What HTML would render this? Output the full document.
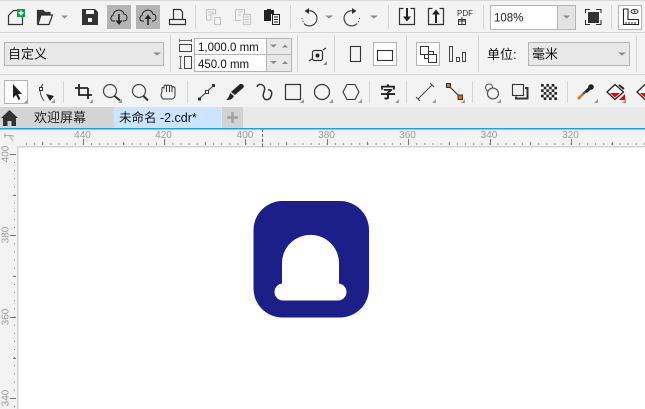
<!DOCTYPE html>
<html><head><meta charset="utf-8">
<style>
html,body{margin:0;padding:0;width:645px;height:409px;overflow:hidden;background:#f3f3f3}
svg{display:block}
text{font-family:"Liberation Sans","Noto Sans CJK SC",sans-serif}
</style></head><body>
<svg width="645" height="409" viewBox="0 0 645 409" xmlns="http://www.w3.org/2000/svg">
<defs><pattern id="ck" width="5.34" height="5.34" patternUnits="userSpaceOnUse" x="541" y="84"><rect width="5.34" height="5.34" fill="#222"/><rect width="2.67" height="2.67" fill="#fff" x="2.67"/><rect width="2.67" height="2.67" fill="#fff" y="2.67"/></pattern></defs>
<rect width="645" height="409" fill="#f3f3f3"/>
<rect y="0" width="645" height="1" fill="#d8d8d8"/>
<!-- row separators -->
<rect y="32" width="645" height="1" fill="#d6d6d6"/>
<rect y="74" width="645" height="1" fill="#d6d6d6"/>
<g fill="#d6d6d6">
<rect x="195" y="5" width="1" height="24"/><rect x="290" y="5" width="1" height="24"/><rect x="388" y="5" width="1" height="24"/><rect x="483" y="5" width="1" height="24"/><rect x="611" y="5" width="1" height="24"/>
<rect x="170" y="35" width="1" height="37"/><rect x="297" y="35" width="1" height="37"/><rect x="334" y="35" width="1" height="37"/><rect x="406" y="35" width="1" height="37"/><rect x="478" y="35" width="1" height="37"/><rect x="636" y="35" width="1" height="37"/>
<rect x="63" y="81" width="1" height="22"/><rect x="187" y="81" width="1" height="22"/><rect x="369" y="81" width="1" height="22"/><rect x="406" y="81" width="1" height="22"/><rect x="472" y="81" width="1" height="22"/><rect x="567" y="81" width="1" height="22"/>
</g>

<!-- ROW 1 -->
<path d="M8.5 15.5 L13.5 10.5 H22.5 V24.5 H8.5 Z" fill="none" stroke="#333" stroke-width="1.2"/>
<rect x="17" y="9" width="8" height="8" fill="#0c9d45"/>
<path d="M21 10.5v5M18.5 13h5" stroke="#fff" stroke-width="1.4"/>
<path d="M37.5 24.5 V10.5 H43 L45 12.5 H50 V15 H41 L38 24.5 H49 L52.5 15 H50" fill="none" stroke="#333" stroke-width="1.2"/>
<path d="M37 10 H43 L45 12 H50 V15 H41 L38 22 H37 Z" fill="#333"/>
<path d="M61 15.5h7l-3.500 3z" fill="#8a8a8a"/>
<path d="M82 9 H95 L98 12 V25 H82 Z" fill="#333"/>
<rect x="86" y="10" width="8" height="4" fill="#f3f3f3"/>
<rect x="88" y="18" width="4" height="4" fill="#f3f3f3"/>
<rect x="107" y="5" width="24" height="24" fill="#b4b4b4"/>
<rect x="136" y="5" width="24" height="24" fill="#b4b4b4"/>
<path d="M115 21 H113 C110 21 110.500 16 113 15.500 C113 10 122 7.500 124 14 C128 14.500 128 21 124 21 H123" fill="none" stroke="#222" stroke-width="1"/>
<path d="M119 14 V21" stroke="#222" stroke-width="1.600"/><path d="M115.500 20.500h7l-3.500 4.500z" fill="#222"/>
<path d="M144 21 H142 C139 21 139.500 16 142 15.500 C142 10 151 7.500 153 14 C157 14.500 157 21 153 21 H152" fill="none" stroke="#222" stroke-width="1"/>
<path d="M148 18 V25" stroke="#222" stroke-width="1.600"/><path d="M144.500 19h7l-3.500 -4.500z" fill="#222"/>
<path d="M173.500 19 V9.500 H180.500 L182.500 12 V19 M169.500 24.500 V19.500 H185.500 V24.500 Z" fill="none" stroke="#333" stroke-width="1.200"/>
<g fill="none" stroke="#c4c4c4" stroke-width="1.100">
<path d="M206.500 9.500 H215.500 V14 H211 V20 H206.500 Z M208 12h6M208 15h2"/>
<rect x="214.500" y="17.500" width="6" height="7"/>
<path d="M235.500 9.500 H244.500 V14.500 M235.500 9.500 V20.500 H241 M238 12h5M238 15h3"/>
<rect x="243.500" y="14.500" width="7" height="10"/><path d="M245 17h4M245 19.500h4M245 22h4"/>
</g>
<path d="M264 10 H267 V9 H271 V10 H274 V14 H271 V21 H264 Z" fill="#222"/>
<rect x="272.500" y="14.500" width="7" height="10" fill="#f3f3f3" stroke="#222"/>
<path d="M274 17h4M274 19.500h4M274 22h4" stroke="#222"/>
<path d="M308 11 A7.500 7.500 0 1 1 304 23.500" fill="none" stroke="#333" stroke-width="1.100"/>
<path d="M304.500 11 L309 8 V14 Z" fill="#333"/>
<path d="M301.500 18.500h1M302.500 21.500h1" stroke="#333"/>
<path d="M325 15.500h8l-4 3z" fill="#8a8a8a"/>
<path d="M353 11 A7.500 7.500 0 1 0 357 23.500" fill="none" stroke="#333" stroke-width="1.100"/>
<path d="M356.500 11 L352 8 V14 Z" fill="#333"/>
<path d="M360 18.500h-1M359 21.500h-1" stroke="#333"/>
<path d="M370 15.500h8l-4 3z" fill="#8a8a8a"/>
<path d="M403.500 8.500 H399.500 V24.500 H414.500 V8.500 H410.500" fill="none" stroke="#333" stroke-width="1.200"/>
<path d="M407 8 V17" stroke="#222" stroke-width="2"/><path d="M403 16.500h8l-4 5z" fill="#222"/>
<path d="M432.500 8.500 H428.500 V24.500 H443.500 V8.500 H439.500" fill="none" stroke="#333" stroke-width="1.200"/>
<path d="M436 14 V23" stroke="#222" stroke-width="2"/><path d="M432 14.500h8l-4 -5z" fill="#222"/>
<text x="457" y="16" font-size="8" fill="#333">PDF</text>
<rect x="458.500" y="19.500" width="7" height="5" fill="none" stroke="#333"/><path d="M462 17v7M459 21h6" stroke="#333"/>
<rect x="490.500" y="5.500" width="85" height="24" fill="#fff" stroke="#b4b4b4"/>
<rect x="557" y="6" width="18" height="23" fill="#e3e3e3"/><rect x="557" y="6" width="1" height="23" fill="#b4b4b4"/>
<path d="M563 15.500h7l-3.500 3z" fill="#8a8a8a"/>
<text x="494" y="21.500" font-size="11.500" fill="#222">108%</text>
<rect x="588" y="12" width="11" height="11" fill="#333"/>
<path d="M585.500 13 V9.500 H590 M596 9.500 H601 V13 M601 20 V24.500 H596 M590 24.500 H585.500 V20" fill="none" stroke="#333" stroke-width="1.100"/>
<rect x="618.500" y="5.500" width="23" height="24" fill="#fff" stroke="#b4b4b4"/>
<path d="M623.500 9 V24.500 H638.500 V19.500 H628 V9 Z" fill="none" stroke="#222" stroke-width="1.100"/>
<path d="M626 24v-2M629 24v-2M632 24v-2M635 24v-2" stroke="#222"/>
<ellipse cx="634.500" cy="11.500" rx="3.500" ry="2" fill="none" stroke="#333"/><circle cx="634.500" cy="11.500" r="1" fill="#333"/>

<!-- ROW 2 -->
<rect x="4.500" y="42.500" width="159" height="23" fill="#e8e8e8" stroke="#b4b4b4"/>
<text x="8" y="58.500" font-size="13" fill="#111">自定义</text>
<path d="M153 52.500h8l-4 3z" fill="#8a8a8a"/>
<path d="M179 40.500h13M179.500 39v3M191.500 39v3" stroke="#666" stroke-width="1"/>
<rect x="179.500" y="44.500" width="12" height="7" fill="none" stroke="#444"/>
<path d="M180.500 56v13M179 56.500h3M179 68.500h3" stroke="#666" stroke-width="1"/>
<rect x="184.500" y="56.500" width="7" height="12" fill="none" stroke="#444"/>
<rect x="194.500" y="38.500" width="97" height="33" fill="#fff" stroke="#b4b4b4"/>
<rect x="266" y="39" width="25" height="32" fill="#e8e8e8"/>
<rect x="266" y="39" width="1" height="32" fill="#b4b4b4"/>
<rect x="195" y="54" width="96" height="1" fill="#b4b4b4"/>
<text x="198" y="51" font-size="11.500" fill="#111">1,000.0 mm</text>
<text x="198" y="68" font-size="11.500" fill="#111">450.0 mm</text>
<path d="M270 44.500h7l-3.500 3zM270 61h7l-3.500 3z" fill="#8a8a8a"/>
<path d="M282 47.500h6l-3 -3zM282 64h6l-3 -3z" fill="#8a8a8a"/>
<rect x="312.500" y="50.500" width="10" height="10" rx="2" fill="none" stroke="#333" stroke-width="1.200"/>
<circle cx="317.500" cy="55.500" r="2" fill="#222"/>
<path d="M309 61 L312 59 M323 50 L326 48" stroke="#333" stroke-width="1.200"/>
<path d="M327 65 h-4 l4 -4z" fill="#888"/>
<rect x="350.500" y="46.500" width="10" height="15" fill="none" stroke="#333" stroke-width="1.100"/>
<rect x="373.500" y="42.500" width="23" height="23" fill="#fff" stroke="#b4b4b4"/>
<rect x="377.500" y="50.500" width="15" height="10" fill="none" stroke="#333" stroke-width="1.100"/>
<rect x="416.500" y="42.500" width="23" height="23" fill="#fff" stroke="#b4b4b4"/>
<rect x="420.500" y="46.500" width="8" height="8" fill="none" stroke="#333"/>
<path d="M428.500 51.500 H433.500 V54.500 M424.500 54.500 V58.500 H428.500 M428.500 54.500 H436.500 V62.500 H428.500 Z" fill="none" stroke="#333"/>
<path d="M449.500 46.500h3v15h-3zM456.500 57.500h3v4h-3zM462.500 52.500h3v9h-3z" fill="none" stroke="#444"/>
<text x="487" y="59" font-size="13" fill="#111">单位:</text>
<rect x="528.500" y="42.500" width="101" height="23" fill="#e8e8e8" stroke="#b4b4b4"/>
<text x="532" y="58.500" font-size="13" fill="#111">毫米</text>
<path d="M618 52.500h8l-4 3z" fill="#8a8a8a"/>

<!-- ROW 3 -->
<rect x="4.500" y="80.500" width="23" height="23" fill="#fff" stroke="#b4b4b4"/>
<path d="M13 84 V98 L16 95 L18.500 100 L20.500 99 L18 94 H22 Z" fill="#222"/>
<path d="M28 103 h-4 l4 -4z" fill="#999"/>
<path d="M43 84 Q37 91 44 101" fill="none" stroke="#444"/>
<rect x="39.500" y="87.500" width="3" height="3" fill="#fff" stroke="#333"/>
<path d="M46 94 L54 96 L50 101 Z" fill="#222"/>
<path d="M55 103 h-4 l4 -4z" fill="#999"/>
<path d="M75 88 H88 M79 84 V95 H92 M88 88 V99" fill="none" stroke="#222" stroke-width="1.800"/>
<path d="M93 103 h-4 l4 -4z" fill="#999"/>
<circle cx="110" cy="91" r="6.500" fill="none" stroke="#444" stroke-width="1.200"/><path d="M114.500 96 L120 100.500" stroke="#333" stroke-width="2"/>
<path d="M122 103 h-4 l4 -4z" fill="#999"/>
<circle cx="139" cy="91" r="6.500" fill="none" stroke="#444" stroke-width="1.200"/><path d="M143.500 96 L148 100.500" stroke="#333" stroke-width="2"/>
<path d="M163 99 C160 96 161 94 162 92 V88 Q163 87 164 88 V86 Q165 84 166.500 86 Q168 84 169.500 86 Q171 84 172 87 Q174 86 175 88 V96 Q174 99 172 99 Z M166.500 86 V92 M169.500 86 V92 M172 87 V92" fill="none" stroke="#333" stroke-width="1"/>
<path d="M199 99 L213 86" stroke="#333"/><rect x="198" y="97.500" width="3" height="3" fill="#333"/><rect x="212" y="84" width="3" height="3" fill="#333"/>
<rect x="205.500" y="90.500" width="3" height="3" fill="#fff" stroke="#333"/>
<path d="M242 84 Q245 86 243 88 L235 95 L231 92 L240 84 Z" fill="#222"/>
<path d="M230 93 L234 96 Q232 100 228 100 H226 Q229 98 230 93 Z" fill="#222"/>
<path d="M257 87 C258 83.500 263 83.500 264.500 87.500 C265.500 91 262 94 263.500 97 C265 101 270 100.500 271.500 95 C272.500 91 270 89.500 268 90" fill="none" stroke="#333" stroke-width="1.500"/>
<rect x="285.500" y="84.500" width="15" height="15" fill="none" stroke="#333" stroke-width="1.200"/>
<path d="M304 103 h-4 l4 -4z" fill="#999"/>
<circle cx="322" cy="92" r="7.500" fill="none" stroke="#333" stroke-width="1.200"/>
<path d="M333 103 h-4 l4 -4z" fill="#999"/>
<path d="M343 92 L347 84.500 H355 L359 92 L355 99.500 H347 Z" fill="none" stroke="#333" stroke-width="1.100"/>
<path d="M362 103 h-4 l4 -4z" fill="#999"/>
<text x="380" y="98" font-size="16" font-weight="bold" fill="#222">字</text>
<path d="M399 103 h-4 l4 -4z" fill="#999"/>
<path d="M418 99 L432 85" stroke="#444"/><path d="M416 97 L420 101 M430 83 L434 87" stroke="#444"/>
<path d="M436 103 h-4 l4 -4z" fill="#999"/>
<path d="M449 86 L460 97" stroke="#333" stroke-width="1.200"/>
<rect x="446.500" y="83.500" width="4" height="4" fill="#f06a00" stroke="#333"/>
<rect x="458" y="95" width="4.500" height="4.500" fill="#f06a00" stroke="#333"/>
<path d="M465 103 h-4 l4 -4z" fill="#999"/>
<circle cx="489" cy="87.500" r="3.500" fill="none" stroke="#555"/><circle cx="493" cy="93.500" r="5.500" fill="#f3f3f3" stroke="#444" stroke-width="1.100"/>
<path d="M501 103 h-4 l4 -4z" fill="#999"/>
<rect x="512.500" y="84.500" width="11" height="11" fill="#f3f3f3" stroke="#333" stroke-width="1.100"/>
<path d="M525 88 H527.500 V98.500 H516 V96.500" fill="none" stroke="#333" stroke-width="2"/>
<rect x="541" y="84" width="16" height="16" fill="url(#ck)"/>
<path d="M583 94 L589 88.500" stroke="#555" stroke-width="2.500"/>
<path d="M586 92 L591 87" stroke="#222" stroke-width="3"/>
<circle cx="591" cy="87" r="2.800" fill="#222"/>
<path d="M578 99 L583 94" stroke="#e8681a" stroke-width="2.500"/>
<path d="M598 103 h-4 l4 -4z" fill="#999"/>
<path d="M607 92 L615 84.500 L623.500 92 L615 99.500 Z" fill="#fff" stroke="#222" stroke-width="1.300"/>
<path d="M610 93 H620 L615 97.500 Z" fill="#e00"/>
<path d="M619 85 L624 89" stroke="#222" stroke-width="2"/>
<path d="M619 100 L625 94 V100 Z" fill="#e00"/>
<path d="M626 103 h-4 l4 -4z" fill="#999"/>
<path d="M637 92 L645 84.500 L654 92 L645 99.500 Z" fill="#fff" stroke="#222" stroke-width="1.300"/>
<path d="M640 93 H650 L645 97.500 Z" fill="#e00"/>

<!-- TABS -->
<rect x="0" y="107" width="645" height="21" fill="#e8e8e8"/>
<rect x="0" y="107" width="114" height="21" fill="#d4d4d4"/>
<rect x="114" y="107" width="107" height="21" fill="#cce4ff"/>
<rect x="222" y="107" width="21" height="21" fill="#d2d2d2"/>
<path d="M1 118 L9.500 110 L18 118 H16 V126 H11.500 V121 H7.500 V126 H3 V118 Z" fill="#333"/>
<text x="34" y="122" font-size="13" fill="#222">欢迎屏幕</text>
<text x="119" y="122" font-size="12.500" fill="#111">未命名 -2.cdr*</text>
<path d="M232.500 112 V123 M227 117.500 H238" stroke="#a2a2a2" stroke-width="2.500"/>
<rect x="0" y="128" width="645" height="1.500" fill="#1e9fe4"/>

<!-- RULER -->
<rect x="0" y="130" width="645" height="279" fill="#f3f3f3"/>
<rect x="18" y="147" width="627" height="262" fill="#fff"/>
<rect x="17" y="146" width="628" height="1.500" fill="#d2d2d2"/>
<rect x="17" y="146" width="1.500" height="263" fill="#d2d2d2"/>
<g font-size="10" fill="#999" text-anchor="middle">
<text x="82.500" y="138">440</text><text x="163.500" y="138">420</text><text x="245" y="138">400</text><text x="326.500" y="138">380</text><text x="407.500" y="138">360</text><text x="489" y="138">340</text><text x="570.500" y="138">320</text>
</g>
<path d="M4 135.500h8M5 133v5M9 135 L13 141M11 136l3 0" stroke="#aaa" fill="none"/>
<g fill="#777">
<rect x="83" y="139" width="1" height="6"/><rect x="164" y="139" width="1" height="6"/><rect x="245" y="139" width="1" height="6"/><rect x="327" y="139" width="1" height="6"/><rect x="408" y="139" width="1" height="6"/><rect x="490" y="139" width="1" height="6"/><rect x="571" y="139" width="1" height="6"/>
<rect x="42" y="142" width="1" height="3"/><rect x="123" y="142" width="1" height="3"/><rect x="205" y="142" width="1" height="3"/><rect x="286" y="142" width="1" height="3"/><rect x="367" y="142" width="1" height="3"/><rect x="449" y="142" width="1" height="3"/><rect x="530" y="142" width="1" height="3"/><rect x="612" y="142" width="1" height="3"/>
</g>
<path d="M26 144H645" stroke="#777" stroke-width="1.500" stroke-dasharray="1 7.130"/>
<path d="M262.500 129 V147" stroke="#666" stroke-dasharray="3 2"/>
<g font-size="10" fill="#999" text-anchor="middle">
<text transform="translate(8.500 154) rotate(-90)">400</text>
<text transform="translate(8.500 235) rotate(-90)">380</text>
<text transform="translate(8.500 317) rotate(-90)">360</text>
<text transform="translate(8.500 398) rotate(-90)">340</text>
</g>
<g fill="#777">
<rect x="10" y="154" width="6" height="1"/><rect x="10" y="235" width="6" height="1"/><rect x="10" y="317" width="6" height="1"/><rect x="10" y="398" width="6" height="1"/>
<rect x="13" y="195" width="3" height="1"/><rect x="13" y="276" width="3" height="1"/><rect x="13" y="358" width="3" height="1"/>
</g>
<path d="M14.500 154V409" stroke="#777" stroke-width="1" stroke-dasharray="1 7.130" stroke-dashoffset="-8"/>

<!-- LOGO -->
<rect x="253.500" y="201" width="115.500" height="116.500" rx="29" fill="#1c1f87"/>
<path d="M282 285 V263 A28.400 28 0 0 1 339 263 V285 Z" fill="#fff"/>
<rect x="274.500" y="283.500" width="72" height="17" rx="8.500" fill="#fff"/>
</svg>
</body></html>
